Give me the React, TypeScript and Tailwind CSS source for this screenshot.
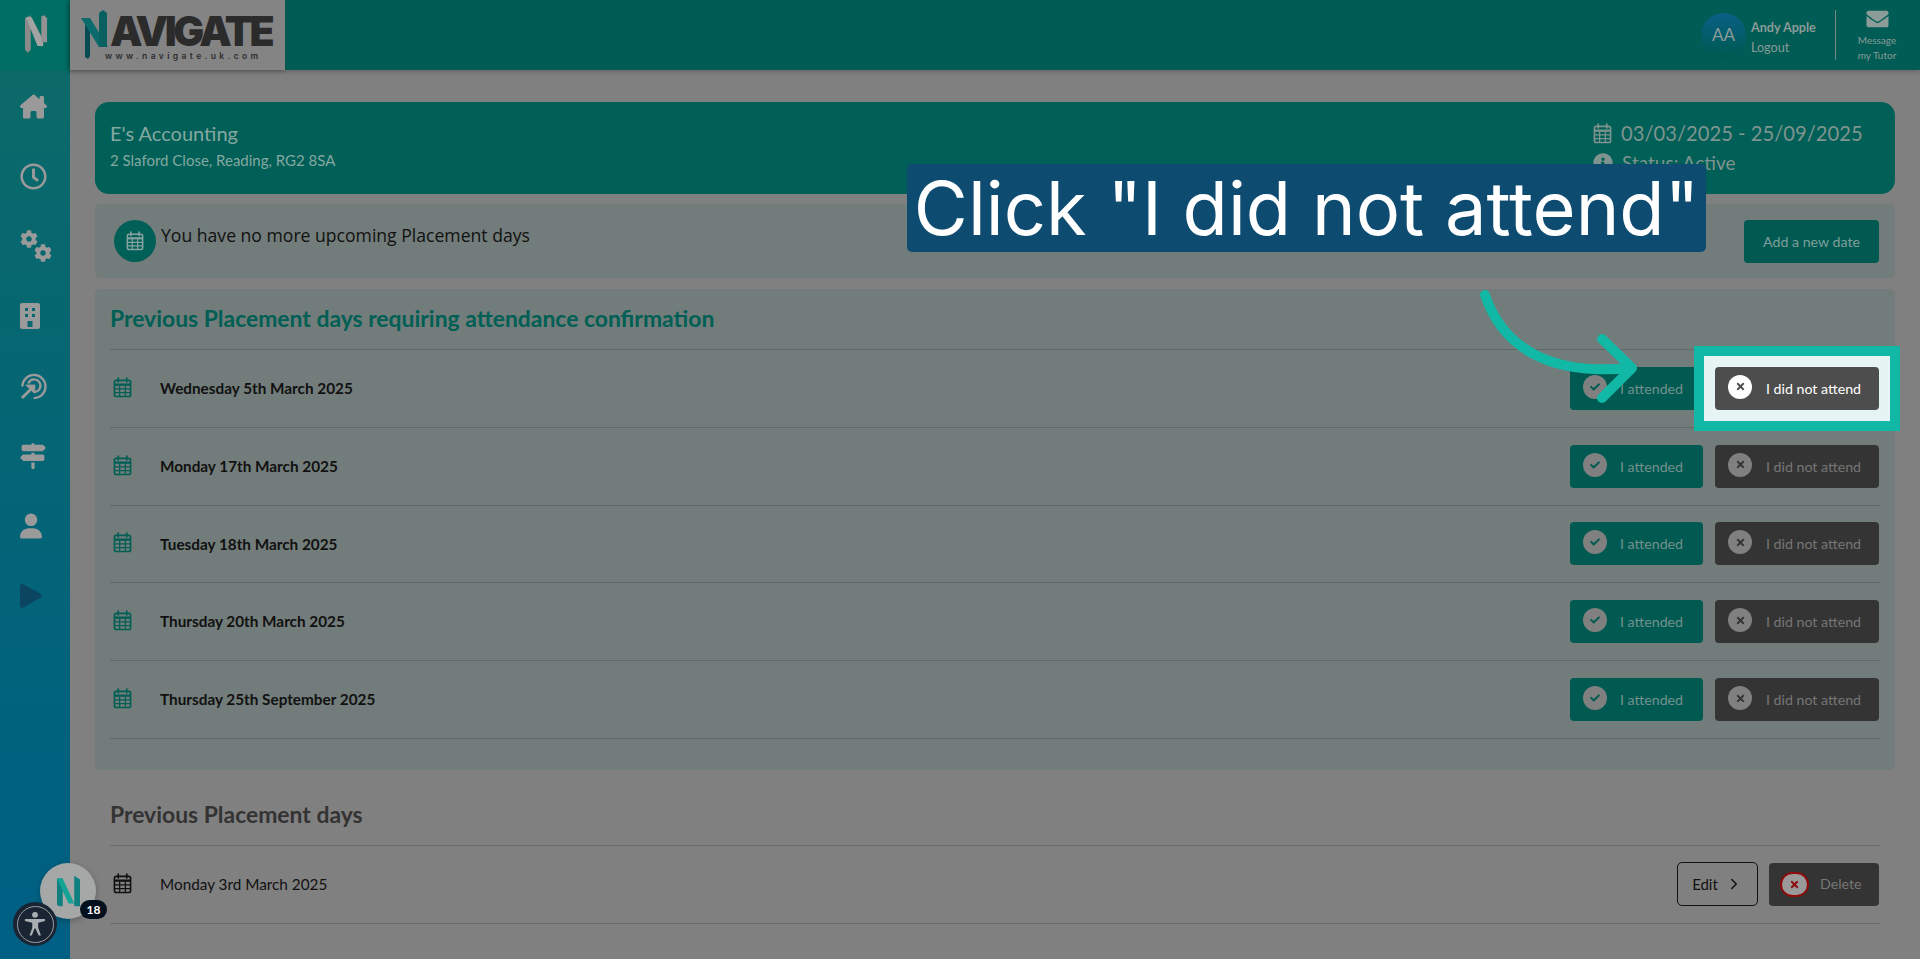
import React from 'react'
import { FaRegClock, FaCog, FaEnvelope, FaInfoCircle, FaCheck, FaTimes } from 'react-icons/fa'
import { FaHouseChimney, FaSignsPost, FaUser } from 'react-icons/fa6'
import { FiChevronRight } from 'react-icons/fi'

function CalendarIcon({ className }: { className: string }) {
  return (
    <svg viewBox="0 0 20 22" className={className} fill="none" stroke="currentColor" strokeWidth="1.7">
      <rect x="1.5" y="3.5" width="17" height="17" rx="2" />
      <path d="M1.5 12.5h17M1.5 16.5h17M7 8.5v12M13 8.5v12" strokeWidth="1.3" />
      <path d="M1.5 8h17" strokeWidth="2.4" />
      <path d="M5.5 1v4M14.5 1v4" strokeLinecap="round" strokeWidth="1.8" />
    </svg>
  )
}

function BuildingIcon() {
  return (
    <svg viewBox="0 0 20 26" className="w-5 h-[26px]" fill="currentColor">
      <path fillRule="evenodd" d="M2 0h16a2 2 0 0 1 2 2v22a2 2 0 0 1-2 2H2a2 2 0 0 1-2-2V2a2 2 0 0 1 2-2zM5 5v3h3V5zM12 5v3h3V5zM5 11v3h3v-3zM12 11v3h3v-3zM7.500 18v6h5v-6z" />
    </svg>
  )
}

function TargetIcon() {
  return (
    <svg viewBox="0 0 28 28" className="w-[27px] h-[27px]" fill="none" stroke="currentColor">
      <path d="M2.500 13A12 12 0 1 1 15 26" strokeWidth="2.400" strokeLinecap="round" />
      <path d="M9 10a6.500 6.500 0 1 1 7 9.500" strokeWidth="2.400" strokeLinecap="round" />
      <path d="M2 26 12 16" strokeWidth="3" />
      <path d="M6 12.500 15.500 12.500 15 21z" fill="currentColor" strokeWidth="1" />
    </svg>
  )
}

function PlayIcon() {
  return (
    <svg viewBox="0 0 22 24" className="w-[22px] h-6" fill="#0b4560">
      <path d="M0 2.500C0 .7 1.800-.5 3.500.4l17 9c1.800 1 1.800 3.400 0 4.300l-17 9.800C1.800 24.500 0 23.300 0 21.500z" />
    </svg>
  )
}

function NavMark({ light }: { light?: boolean }) {
  if (light) {
    return (
      <svg viewBox="0 0 24 40" className="w-[23px] h-[39px]">
        <path d="M0 3 6 0v36l-3 3-3-3z" fill="#8a8a8a" />
        <path d="M1 2h6l12 24v6h-6z" fill="#a3a3a3" />
        <path d="M17 1l3-1 3 3v25h-6z" fill="#929292" />
      </svg>
    )
  }
  return (
    <svg viewBox="0 0 24 32" className="w-[23px] h-8">
      <path d="M0 3h6v29H2l-2-2z" fill="#0f7f80" />
      <path d="M0 3h6l12 26h-6z" fill="#14a394" />
      <path d="M18 0l6 4v28h-6z" fill="#0f7f80" />
    </svg>
  )
}

function LogoN() {
  return (
    <svg viewBox="0 0 30 50" className="w-[30px] h-[50px] shrink-0 -mr-px">
      <path d="M0 8h9v38l-2 3-3-2V12z" fill="#064b50" />
      <path d="M0 8h9l18 29h-9z" fill="#0b6b6c" />
      <path d="M18 3l4-3 4 3v34h-8z" fill="#0a5f60" />
    </svg>
  )
}

function AttendButton() {
  return (
    <div className="w-[133px] h-[43px] rounded-[4px] bg-[#005a52] flex items-center pl-[13px] gap-[13px] text-[14.200px] text-[#74908c]">
      <span className="w-6 h-6 rounded-full bg-[#808080] flex items-center justify-center text-[#005a52] -mt-[3px]">
        <FaCheck className="w-[10px] h-[10px]" />
      </span>
      I attended
    </div>
  )
}

function MissButton({ active }: { active?: boolean }) {
  return (
    <div className={active
      ? 'relative z-20 w-[164px] h-[43px] rounded-[4px] bg-[#4d4d4d] flex items-center pl-[13px] gap-[14px] text-[14.200px] text-white'
      : 'w-[164px] h-[43px] rounded-[4px] bg-[#343434] flex items-center pl-[13px] gap-[14px] text-[14.200px] text-[#767676]'}>
      <span className={active
        ? 'w-6 h-6 rounded-full bg-white flex items-center justify-center text-[#4d4d4d] -mt-[3px]'
        : 'w-6 h-6 rounded-full bg-[#808080] flex items-center justify-center text-[#343434] -mt-[3px]'}>
        <FaTimes className="w-[11px] h-[11px]" />
      </span>
      I did not attend
    </div>
  )
}

const days = [
  'Wednesday 5th March 2025',
  'Monday 17th March 2025',
  'Tuesday 18th March 2025',
  'Thursday 20th March 2025',
  'Thursday 25th September 2025',
]

export default function App() {
  return (
    <div className="relative h-[959px] overflow-hidden flex bg-[#808080] font-['Lato',sans-serif] text-[#111]">
      <aside className="w-[70px] shrink-0 flex flex-col bg-gradient-to-b from-[#0d6a66] to-[#005f85] text-[#9a9a9a]">
        <div className="h-[71px] bg-[#006e62] flex items-center justify-center pb-[3px] pl-[3px]">
          <NavMark light />
        </div>
        <div className="h-[70px] flex items-center pl-5"><FaHouseChimney className="w-[27px] h-[27px]" /></div>
        <div className="h-[70px] flex items-center pl-5"><FaRegClock className="w-[27px] h-[27px]" /></div>
        <div className="h-[70px] flex items-center pl-5">
          <div className="w-8 h-8 flex">
            <FaCog className="w-[18px] h-[18px] shrink-0" />
            <FaCog className="w-[18px] h-[18px] shrink-0 -ml-1 self-end" />
          </div>
        </div>
        <div className="h-[70px] flex items-center pl-5"><BuildingIcon /></div>
        <div className="h-[70px] flex items-center pl-5"><TargetIcon /></div>
        <div className="h-[70px] flex items-center pl-5"><FaSignsPost className="w-[26px] h-[26px]" /></div>
        <div className="h-[70px] flex items-center pl-5"><FaUser className="w-[22px] h-[26px]" /></div>
        <div className="h-[70px] flex items-center pl-5"><PlayIcon /></div>
      </aside>

      <div className="flex-1 flex flex-col min-w-0">
        <header className="h-[70px] shrink-0 bg-[#005c54] flex shadow-[0_2px_5px_rgba(0,0,0,0.2)]">
          <div className="w-[215px] bg-[#848484] pl-[11px] pt-[10px] flex flex-col shadow-[-2px_1px_4px_rgba(0,0,0,0.25)]">
            <div className="flex items-start">
              <LogoN />
              <span className="font-['Inter',sans-serif] font-black text-[41px] leading-[30px] tracking-[-3.400px] text-[#2b2b2b] pt-[6px]">AVIGATE</span>
            </div>
            <div className="font-['Inter',sans-serif] font-semibold text-[8.500px] tracking-[3.400px] leading-none -mt-[8px] ml-[24px] text-[#2e2e2e]">www.navigate.uk.com</div>
          </div>
          <div className="flex-1" />
          <div className="flex items-center text-[#8a9b98]">
            <div className="w-[45px] h-[45px] rounded-full bg-gradient-to-b from-[#0b5f86] to-[#00594f] flex items-center justify-center text-[17px] mr-[5px]">AA</div>
            <div className="w-[84px] text-[12.600px] leading-[20px] pt-[5px]">
              <div className="font-bold">Andy Apple</div>
              <div>Logout</div>
            </div>
            <div className="w-px h-[50px] bg-[#6f8a86]" />
            <div className="w-[84px] flex flex-col items-center text-[10px] leading-[14.500px] pr-[2px]">
              <FaEnvelope className="w-[25px] h-[22px] text-[#8c9c99] mb-[3px]" />
              <div>Message</div>
              <div>my Tutor</div>
            </div>
          </div>
        </header>

        <main className="flex-1 pl-[25px] pr-[25px] pt-[32px] min-h-0">
          <section className="h-[92px] rounded-[14px] bg-[#005f56] flex justify-between pl-[15px] pr-[34px] pt-[18px] text-[#85a8a2]">
            <div>
              <div className="text-[20px] leading-[26px]">E's Accounting</div>
              <div className="text-[15px] leading-[22px] mt-[3px]">2 Slaford Close, Reading, RG2 8SA</div>
            </div>
            <div className="w-[268px] text-[#7f9490] whitespace-nowrap">
              <div className="flex items-center gap-[9px] text-[20.200px] leading-[26px]">
                <CalendarIcon className="w-[19px] h-[21px] shrink-0" />
                03/03/2025 - 25/09/2025
              </div>
              <div className="flex items-center gap-[9px] text-[19px] leading-[26px] mt-[4px]">
                <FaInfoCircle className="w-[20px] h-[20px]" />
                Status: Active
              </div>
            </div>
          </section>

          <section className="h-[74px] mt-[10px] rounded-[5px] bg-[#727c7a] flex items-center pl-[19px] pr-[16px]">
            <div className="w-[42px] h-[42px] rounded-full bg-[#005f56] flex items-center justify-center text-[#86a3a0] mr-[5px]">
              <CalendarIcon className="w-[18px] h-5" />
            </div>
            <div className="font-['Open_Sans',sans-serif] text-[17.600px] -mt-[12px]">You have no more upcoming Placement days</div>
            <div className="flex-1" />
            <div className="w-[135px] h-[43px] mt-px rounded-[4px] bg-[#005a52] flex items-center justify-center text-[14.200px] text-[#7f9f9a]">Add a new date</div>
          </section>

          <section className="h-[481px] mt-[11px] rounded-[5px] bg-[#727c7a] px-[15px]">
            <h2 className="h-[61px] pb-[2px] flex items-center text-[22.900px] font-bold text-[#005f55] border-b border-[#5f6967]">Previous Placement days requiring attendance confirmation</h2>
            {days.map((day, i) => (
              <div key={day} className="h-[77.800px] flex items-center border-b border-[#5f6967] pr-px">
                <CalendarIcon className="w-[19px] h-[21px] ml-[3px] mr-[28px] -mt-[2px] text-[#005f55]" />
                <div className="text-[15.300px] font-bold">{day}</div>
                <div className="flex-1" />
                <AttendButton />
                <div className="w-3" />
                <MissButton active={i === 0} />
              </div>
            ))}
          </section>

          <section className="px-[15px]">
            <h2 className="h-[75.500px] pt-[14px] flex items-center text-[22.900px] font-bold text-[#333] border-b border-[#6b6b6b]">Previous Placement days</h2>
            <div className="h-[78px] flex items-center border-b border-[#6b6b6b] pr-px">
              <CalendarIcon className="w-[19px] h-[21px] ml-[3px] mr-[28px] -mt-[2px] text-[#111]" />
              <div className="text-[15.300px]">Monday 3rd March 2025</div>
              <div className="flex-1" />
              <div className="w-[81px] h-11 rounded-[5px] border border-[#111] flex items-center justify-center gap-[7px] text-[15px]">
                Edit
                <FiChevronRight className="w-[18px] h-[18px]" />
              </div>
              <div className="w-[110px] h-[43px] ml-[11px] rounded-[4px] bg-[#343434] flex items-center pl-[11px] gap-[11px] text-[14.200px] text-[#767676]">
                <span className="w-[29px] h-[25px] rounded-full bg-[#9a9a9a] border-2 border-[#8d0b0b] flex items-center justify-center text-[#8d0b0b]">
                  <FaTimes className="w-[11px] h-[11px]" />
                </span>
                Delete
              </div>
            </div>
          </section>
        </main>
      </div>

      {/* walkthrough overlay */}
      <div className="absolute z-10 left-[1694px] top-[346px] w-[206px] h-[85px] border-[10px] border-[#12b8a6] bg-[#e6f5f4]" />
      <div className="absolute z-30 left-[907px] top-[164px] w-[799px] h-[88px] rounded-[5px] bg-[#0d4b70] flex items-center justify-center font-['Inter',sans-serif] text-[74px] leading-none text-white whitespace-nowrap">Click "I did not attend"</div>
      <svg className="absolute z-30 left-0 top-0 w-[1920px] h-[959px] pointer-events-none" viewBox="0 0 1920 959" fill="none" stroke="#12b8a6" strokeWidth="10" strokeLinecap="round" strokeLinejoin="round">
        <path d="M1485 295C1503 348 1550 376 1630 368" />
        <path d="M1602 339 1632 368 1602 398" />
      </svg>

      <div className="absolute z-20 left-[40px] top-[863px] w-14 h-14 rounded-full bg-[#a6a8a7] shadow-[0_2px_6px_rgba(0,0,0,0.25)] flex items-center justify-center">
        <NavMark />
      </div>
      <div className="absolute z-20 left-[80px] top-[900px] w-[27px] h-[19px] rounded-full bg-[#05101e] text-white text-[12px] font-bold leading-[19px] text-center">18</div>
      <div className="absolute z-30 left-[13px] top-[902px] w-11 h-11 rounded-full bg-[#1a2533] flex items-center justify-center">
        <div className="w-[37px] h-[37px] rounded-full border border-[#9aa0a6] flex items-center justify-center">
          <svg viewBox="0 0 24 28" className="w-[22px] h-[26px]" fill="#a9aeb3">
            <circle cx="12" cy="4" r="3.200" />
            <path d="M1 8.500h22v2.200l-7.500 1.800V18l3 8.500h-2.500L12.500 19h-1L8.500 26.500H6L9 18v-5.500L1 10.700z" />
          </svg>
        </div>
      </div>
    </div>
  )
}
